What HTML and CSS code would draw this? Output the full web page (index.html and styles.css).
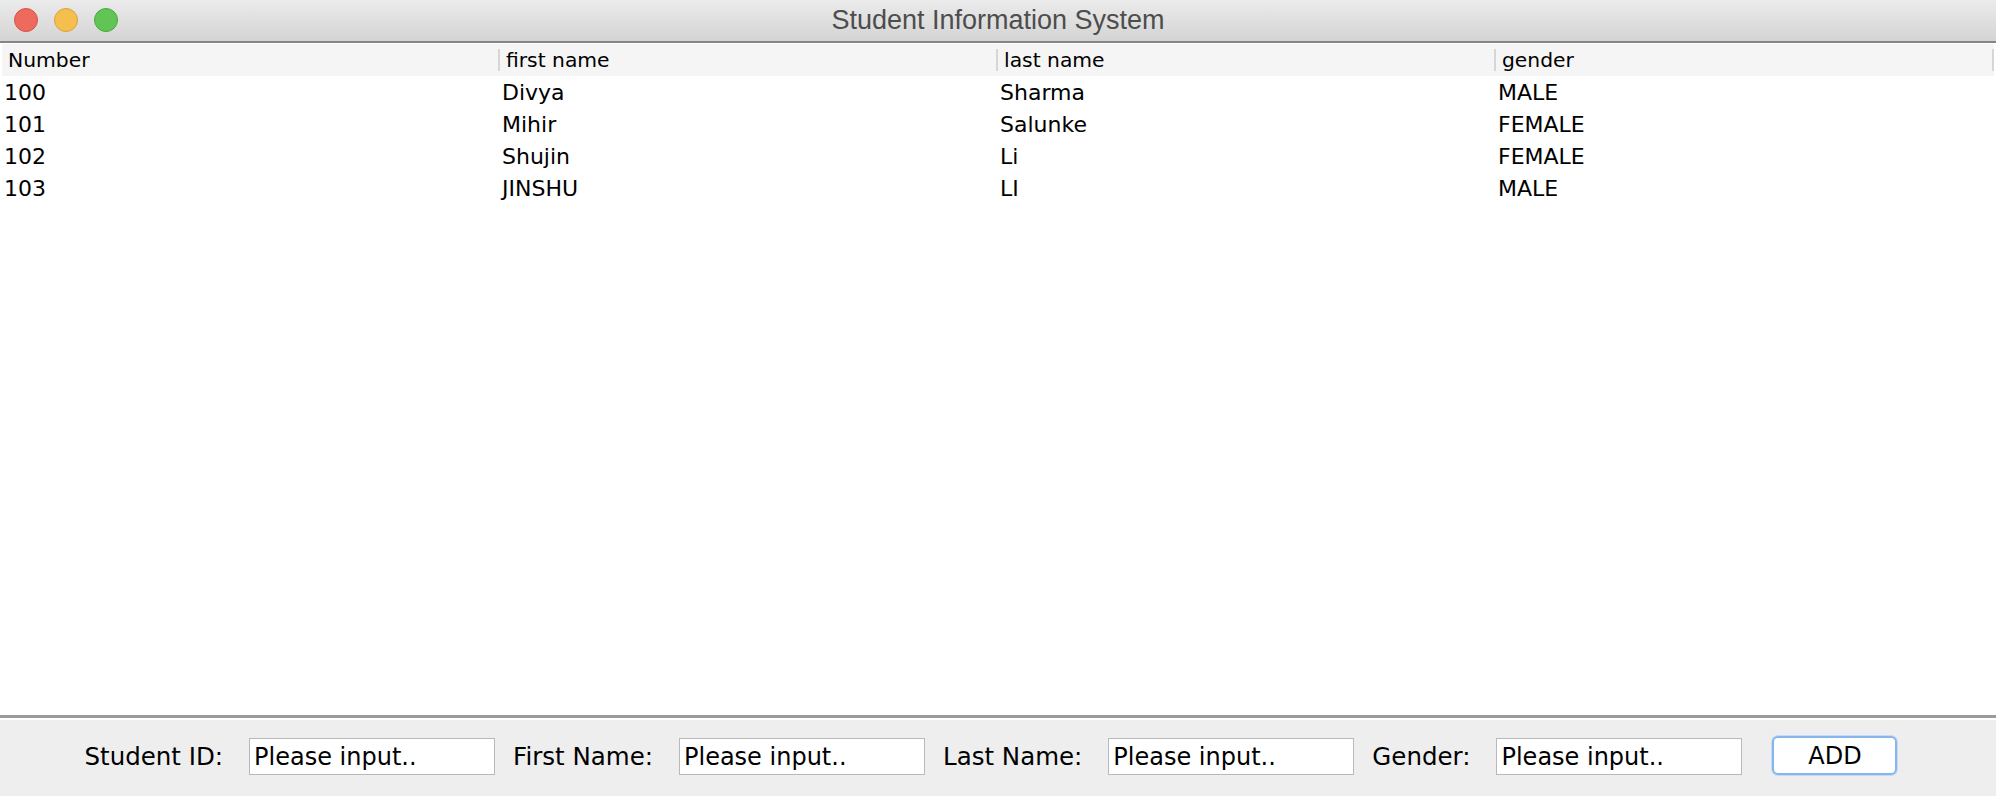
FILE: index.html
```html
<!DOCTYPE html>
<html>
<head>
<meta charset="utf-8">
<title>Student Information System</title>
<link rel="stylesheet" href="styles.css">
</head>
<body>
<div class="window">
  <div class="titlebar">
    <div class="lights">
      <span class="light red"></span>
      <span class="light yellow"></span>
      <span class="light green"></span>
    </div>
    <div class="title">Student Information System</div>
    <div class="lights-spacer"></div>
  </div>
  <div class="title-gap"></div>
  <div class="table-header">
    <div class="hcell first">Number</div>
    <div class="hcell">first name</div>
    <div class="hcell">last name</div>
    <div class="hcell">gender</div>
    <div class="hcell filler"></div>
  </div>
  <div class="table-body">
    <div class="row"><div class="cell">100</div><div class="cell">Divya</div><div class="cell">Sharma</div><div class="cell">MALE</div></div>
    <div class="row"><div class="cell">101</div><div class="cell">Mihir</div><div class="cell">Salunke</div><div class="cell">FEMALE</div></div>
    <div class="row"><div class="cell">102</div><div class="cell">Shujin</div><div class="cell">Li</div><div class="cell">FEMALE</div></div>
    <div class="row"><div class="cell">103</div><div class="cell">JINSHU</div><div class="cell">LI</div><div class="cell">MALE</div></div>
  </div>
  <div class="separator"></div>
  <div class="form-panel">
    <label class="form-label">Student ID:</label>
    <input class="form-input" type="text" value="Please input..">
    <label class="form-label">First Name:</label>
    <input class="form-input" type="text" value="Please input..">
    <label class="form-label">Last Name:</label>
    <input class="form-input" type="text" value="Please input..">
    <label class="form-label">Gender:</label>
    <input class="form-input" type="text" value="Please input..">
    <button class="add-btn" type="button">ADD</button>
  </div>
</div>
</body>
</html>
```

FILE: styles.css
```css
* {
  box-sizing: border-box;
}

html, body {
  margin: 0;
  padding: 0;
  width: 1996px;
  height: 796px;
  overflow: hidden;
  background: #ffffff;
}

.window {
  display: flex;
  flex-direction: column;
  width: 1996px;
  height: 796px;
  font-family: "DejaVu Sans", "Noto Sans", sans-serif;
  color: #000;
}

.titlebar {
  height: 43px;
  flex: none;
  display: flex;
  align-items: center;
  background: linear-gradient(#ebebeb, #d4d4d4);
  border-bottom: 2px solid #858585;
  padding: 0 14px;
}

.lights {
  display: flex;
  gap: 16px;
  width: 104px;
  margin-top: -1px;
}

.lights-spacer {
  width: 104px;
}

.light {
  width: 24px;
  height: 24px;
  border-radius: 50%;
  display: block;
}

.red {
  background: #ee6a5f;
  border: 1px solid #d6544a;
}

.yellow {
  background: #f5bf4f;
  border: 1px solid #d9a23b;
}

.green {
  background: #61c454;
  border: 1px solid #4ca940;
}

.title {
  flex: 1;
  text-align: center;
  font-family: "Liberation Sans", Arial, sans-serif;
  font-size: 27px;
  color: #4d4d4d;
  margin-top: -1px;
}

.title-gap {
  height: 1px;
  flex: none;
  background: #ffffff;
}

.table-header {
  flex: none;
  height: 32px;
  display: flex;
  margin-left: 2px;
  width: 1992px;
  background: #f5f5f5;
}

.hcell {
  width: 498px;
  height: 32px;
  line-height: 32px;
  font-size: 20.3px;
  background: linear-gradient(#d6d6d6, #d6d6d6) left center / 2px 22px no-repeat;
  padding-left: 8px;
  white-space: nowrap;
}

.hcell.first {
  width: 496px;
  background: none;
  padding-left: 6px;
}

.hcell.filler {
  width: 2px;
  padding: 0;
}

.table-body {
  flex: 1;
  background: #ffffff;
  padding-top: 1px;
}

.row {
  display: flex;
  height: 32px;
}

.cell {
  width: 498px;
  line-height: 32px;
  font-size: 22px;
  padding-left: 4px;
  white-space: nowrap;
}

.separator {
  flex: none;
  height: 5px;
  border-top: 3px solid #9b9b9b;
  background: #ffffff;
}

.form-panel {
  flex: none;
  height: 76px;
  background: #eeeeee;
  display: flex;
  justify-content: center;
  align-items: flex-start;
  padding-top: 18px;
  padding-right: 14px;
  gap: 18px;
}

.form-label {
  font-size: 24.5px;
  line-height: 37px;
  margin-right: 8px;
  white-space: nowrap;
}

.form-input {
  width: 246px;
  height: 37px;
  border: 1px solid #b9b9b9;
  background: #ffffff;
  font-family: "DejaVu Sans", "Noto Sans", sans-serif;
  font-size: 24px;
  color: #000;
  padding: 0 4px;
  margin: 0;
  outline: none;
}

.add-btn {
  width: 125px;
  height: 39px;
  margin: -2px 0 0 12px;
  border: 2px solid #86b6ec;
  border-radius: 6px;
  background: #ffffff;
  font-family: "DejaVu Sans", "Noto Sans", sans-serif;
  font-size: 24px;
  color: #000;
  padding: 0;
  box-shadow: 0 0 0 1px #c4dcf7;
}
```
